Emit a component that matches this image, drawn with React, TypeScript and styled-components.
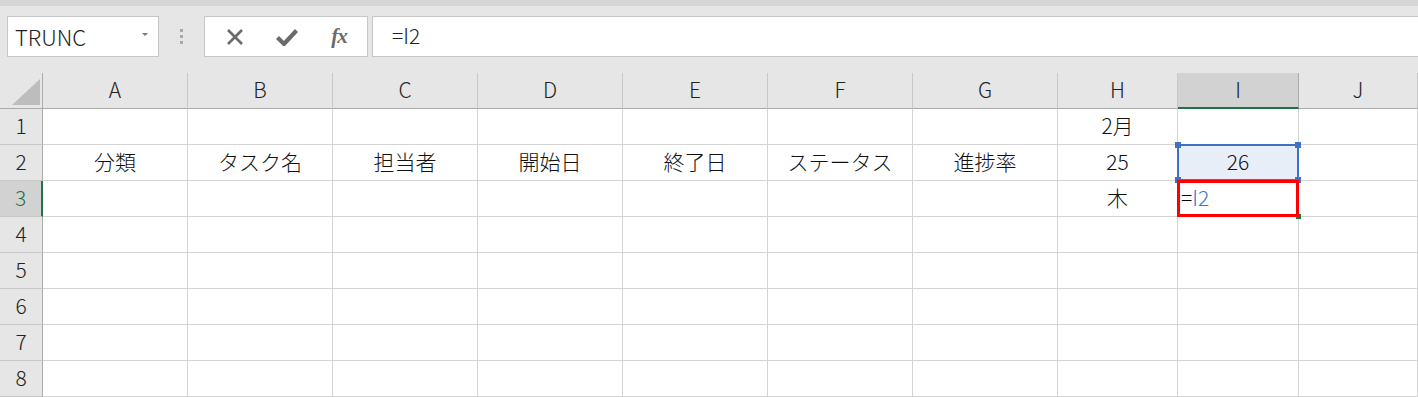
import React from 'react';
import styled, { createGlobalStyle, css } from 'styled-components';

const GlobalStyle = createGlobalStyle`
  html, body {
    margin: 0;
    padding: 0;
    background: #fff;
    overflow: hidden;
  }
  body {
    font-family: "Noto Sans CJK JP", "Noto Sans", sans-serif;
    font-weight: 300;
    color: #111;
  }
`;

type Col = { label: string; width: number };

const columns: Col[] = [
  { label: 'A', width: 145 },
  { label: 'B', width: 145 },
  { label: 'C', width: 145 },
  { label: 'D', width: 145 },
  { label: 'E', width: 145 },
  { label: 'F', width: 145 },
  { label: 'G', width: 145 },
  { label: 'H', width: 120 },
  { label: 'I', width: 121 },
  { label: 'J', width: 119 },
];

const data: Record<string, string> = {
  H1: '2月',
  A2: '分類',
  B2: 'タスク名',
  C2: '担当者',
  D2: '開始日',
  E2: '終了日',
  F2: 'ステータス',
  G2: '進捗率',
  H2: '25',
  I2: '26',
  H3: '木',
};

const ACTIVE_COL = 'I';
const ACTIVE_ROW = 3;
const rowCount = 8;

const App = () => {
  return (
    <>
      <GlobalStyle />
      <Window>
        <TopStrip />
        <Toolbar>
          <NameBox>
            <span>TRUNC</span>
            <DropArrow />
          </NameBox>
          <Grip>
            <i />
            <i />
            <i />
          </Grip>
          <FuncButtons>
            <IconSlot>
              <svg width="18" height="18" viewBox="0 0 18 18">
                <path d="M2 2 L16 16 M16 2 L2 16" stroke="#6b6b6b" strokeWidth="2.6" fill="none" />
              </svg>
            </IconSlot>
            <IconSlot>
              <svg width="22" height="18" viewBox="0 0 22 18">
                <path d="M1.5 9.5 L8 16 L20.5 2.5" stroke="#6b6b6b" strokeWidth="4.2" fill="none" strokeLinejoin="round" />
              </svg>
            </IconSlot>
            <IconSlot>
              <FxText>fx</FxText>
            </IconSlot>
          </FuncButtons>
          <FormulaInput>=I2</FormulaInput>
        </Toolbar>

        <Sheet>
          <Corner>
            <CornerTriangle />
          </Corner>
          {columns.map((c) => (
            <ColHeader key={c.label} $active={c.label === ACTIVE_COL}>
              {c.label}
            </ColHeader>
          ))}

          {Array.from({ length: rowCount }, (_, r) => {
            const row = r + 1;
            return (
              <React.Fragment key={row}>
                <RowHeader $active={row === ACTIVE_ROW}>{row}</RowHeader>
                {columns.map((c) => {
                  const id = `${c.label}${row}`;
                  if (id === 'I2') {
                    return (
                      <Cell key={id} $ref>
                        {data[id]}
                        <RefRange>
                          <Handle $pos="tl" />
                          <Handle $pos="tr" />
                          <Handle $pos="bl" />
                          <Handle $pos="br" />
                        </RefRange>
                      </Cell>
                    );
                  }
                  if (id === 'I3') {
                    return (
                      <Cell key={id} $left>
                        <Equals>=</Equals>
                        <RefText>I2</RefText>
                        <EditBox />
                        <FillHandle />
                      </Cell>
                    );
                  }
                  return <Cell key={id}>{data[id]}</Cell>;
                })}
              </React.Fragment>
            );
          })}
        </Sheet>
      </Window>
    </>
  );
};

// Styled Components
const Window = styled.div`
  width: 1418px;
  height: 397px;
  background: #e6e6e6;
  display: flex;
  flex-direction: column;
`;

const TopStrip = styled.div`
  height: 6px;
  background: #d6d6d6;
`;

const Toolbar = styled.div`
  display: flex;
  align-items: center;
  height: 41px;
  padding: 10px 0 16px 7px;
`;

const NameBox = styled.div`
  box-sizing: border-box;
  width: 152px;
  height: 41px;
  background: #fff;
  border: 1px solid #c6c6c6;
  display: flex;
  align-items: center;
  justify-content: space-between;
  padding: 0 10px 1px 7px;
  font-size: 22px;
  color: #222;
`;

const DropArrow = styled.span`
  width: 0;
  height: 0;
  border-left: 3px solid transparent;
  border-right: 3px solid transparent;
  border-top: 3px solid #777;
  margin-bottom: 4px;
`;

const Grip = styled.div`
  width: 45px;
  display: flex;
  flex-direction: column;
  align-items: center;
  gap: 3px;

  i {
    display: block;
    width: 3px;
    height: 3px;
    background: #a8a8a8;
  }
`;

const FuncButtons = styled.div`
  box-sizing: border-box;
  width: 164px;
  height: 41px;
  background: #fff;
  border: 1px solid #c6c6c6;
  display: flex;
  align-items: center;
  justify-content: space-between;
  padding: 0 16px 0 18px;
`;

const IconSlot = styled.div`
  width: 24px;
  display: flex;
  align-items: center;
  justify-content: center;
`;

const FxText = styled.span`
  font-family: "Liberation Serif", "DejaVu Serif", serif;
  font-style: italic;
  font-weight: bold;
  font-size: 21px;
  color: #6b6b6b;
  letter-spacing: -1px;
`;

const FormulaInput = styled.div`
  box-sizing: border-box;
  flex: 1;
  height: 41px;
  margin-left: 4px;
  background: #fff;
  border: 1px solid #c6c6c6;
  border-right: none;
  display: flex;
  align-items: center;
  padding: 0 0 3px 19px;
  font-size: 21px;
  color: #222;
`;

const Sheet = styled.div`
  display: grid;
  grid-template-columns: 43px ${columns.map((c) => `${c.width}px`).join(' ')};
  grid-template-rows: 36px repeat(${rowCount}, 36px);
  background: #fff;
`;

const headerBase = css`
  box-sizing: border-box;
  display: flex;
  align-items: center;
  justify-content: center;
  font-size: 21px;
  color: #222;
  padding-bottom: 3px;
`;

const Corner = styled.div`
  box-sizing: border-box;
  position: relative;
  background: #e6e6e6;
  border-right: 1px solid #ababab;
  border-bottom: 1px solid #ababab;
`;

const CornerTriangle = styled.div`
  position: absolute;
  right: 2px;
  bottom: 3px;
  width: 0;
  height: 0;
  border-left: 28px solid transparent;
  border-bottom: 26px solid #bdbdbd;
`;

const ColHeader = styled.div<{ $active?: boolean }>`
  ${headerBase}
  background: ${(p) => (p.$active ? '#d2d2d2' : '#e6e6e6')};
  border-right: 1px solid ${(p) => (p.$active ? '#ababab' : '#c8c8c8')};
  border-bottom: ${(p) => (p.$active ? '2px solid #217346' : '1px solid #ababab')};
`;

const RowHeader = styled.div<{ $active?: boolean }>`
  ${headerBase}
  background: ${(p) => (p.$active ? '#d2d2d2' : '#e6e6e6')};
  color: ${(p) => (p.$active ? '#217346' : '#222')};
  border-right: ${(p) => (p.$active ? '2px solid #217346' : '1px solid #ababab')};
  border-bottom: 1px solid #c8c8c8;
`;

const Cell = styled.div<{ $ref?: boolean; $left?: boolean }>`
  box-sizing: border-box;
  position: relative;
  display: flex;
  align-items: center;
  justify-content: ${(p) => (p.$left ? 'flex-start' : 'center')};
  padding: 0 0 4px ${(p) => (p.$left ? '3px' : '0')};
  font-size: 21px;
  color: #111;
  background: ${(p) => (p.$ref ? '#e8eef8' : '#fff')};
  border-right: 1px solid #d4d4d4;
  border-bottom: 1px solid #d4d4d4;
`;

const Equals = styled.span`
  color: #000;
`;

const RefText = styled.span`
  color: #3a78c4;
`;

const RefRange = styled.div`
  position: absolute;
  left: -1px;
  top: -1px;
  right: -1px;
  bottom: -1px;
  border: 2px solid #3f70c7;
  z-index: 2;
`;

const handlePos = {
  tl: 'left: -4px; top: -4px;',
  tr: 'right: -4px; top: -4px;',
  bl: 'left: -4px; bottom: -4px;',
  br: 'right: -4px; bottom: -4px;',
};

const Handle = styled.span<{ $pos: keyof typeof handlePos }>`
  position: absolute;
  width: 6px;
  height: 6px;
  background: #3f70c7;
  ${(p) => handlePos[p.$pos]}
`;

const EditBox = styled.div`
  position: absolute;
  left: -1px;
  top: -1px;
  right: -1px;
  bottom: -1px;
  border: 3px solid #ff0000;
  z-index: 3;
`;

const FillHandle = styled.span`
  position: absolute;
  right: -3px;
  bottom: -3px;
  width: 5px;
  height: 5px;
  background: #217346;
  z-index: 2;
`;

export default App;
